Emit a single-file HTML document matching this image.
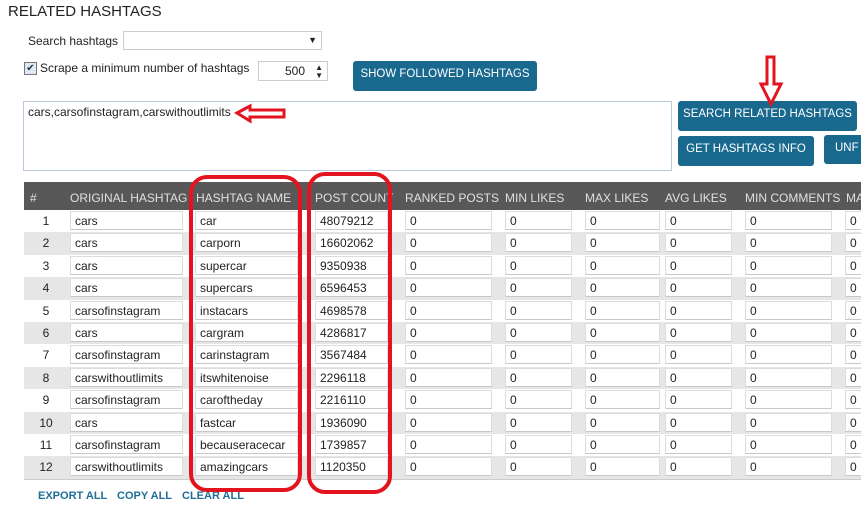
<!DOCTYPE html><html><head><meta charset="utf-8"><style>
body{margin:0;width:861px;height:510px;background:#fff;font-family:"Liberation Sans",sans-serif;position:relative;overflow:hidden;color:#222}
.a{position:absolute}
.t{font-size:12px;white-space:nowrap}
.btn{position:absolute;background:#19698f;color:#fff;font-size:11.5px;border-radius:3px;text-align:center;white-space:nowrap;overflow:hidden}
.row{position:absolute;left:24px;width:837px;height:22.4px;font-size:12px}
.g{background:#e6e6e6}
.row span{position:absolute;top:1px;height:19px;line-height:19px;background:#fff;border:1px solid #dcdcdc;border-bottom-color:#c8c8c8;padding-left:4px;box-sizing:border-box;white-space:nowrap;overflow:hidden}
.row b{position:absolute;left:0;width:44px;text-align:center;font-weight:normal;line-height:22px}
.c1{left:46px;width:113px}.c2{left:171px;width:103px}.c3{left:291px;width:73px}.c4{left:381px;width:87px}.c5{left:481px;width:67px}.c6{left:561px;width:75px}.c7{left:641px;width:67px}.c8{left:721px;width:87px}.c9{left:821px;width:30px}
.hd{position:absolute;top:182px;left:24px;width:837px;height:28px;background:#585858;color:#e0e0e0;font-size:12px}
.hd i{position:absolute;top:9px;font-style:normal;white-space:nowrap;overflow:hidden}
.lk{position:absolute;top:490px;color:#1f6e98;font-weight:bold;font-size:11px}
</style></head><body>
<div class="a" style="left:8px;top:3px;font-size:15px;color:#222">RELATED HASHTAGS</div>
<div class="a t" style="left:28px;top:34px">Search hashtags</div>
<div class="a" style="left:123px;top:31px;width:199px;height:19px;border:1px solid #ccc;box-sizing:border-box"><span class="a" style="right:4px;top:3px;font-size:9px">▼</span></div>
<div class="a" style="left:24px;top:62px;width:11px;height:11px;border:1px solid #777;background:#dfe8f5;font-size:10px;line-height:11px;text-align:center;color:#234">✔</div>
<div class="a t" style="left:40px;top:61px">Scrape a minimum number of hashtags</div>
<div class="a" style="left:258px;top:61px;width:70px;height:20px;border:1px solid #ccc;box-sizing:border-box;font-size:12px;line-height:18px;text-align:right;padding-right:22px">500<span class="a" style="right:4px;font-size:8px;line-height:8px;top:2px">▲<br>▼</span></div>
<div class="btn" style="left:353px;top:61px;width:184px;height:30px;line-height:27px">SHOW FOLLOWED HASHTAGS</div>
<div class="a" style="left:23px;top:101px;width:649px;height:70px;border:1px solid #b8c8dc;box-sizing:border-box;font-size:12px;padding:3px 4px">cars,carsofinstagram,carswithoutlimits</div>
<div class="btn" style="left:678px;top:101px;width:179px;height:30px;line-height:26px">SEARCH RELATED HASHTAGS</div>
<div class="btn" style="left:678px;top:136px;width:136px;height:30px;line-height:26px">GET HASHTAGS INFO</div>
<div class="btn" style="left:824px;top:135px;width:50px;height:29px;line-height:26px;text-align:left;padding-left:11px">UNF</div>
<div class="hd"><i style="left:6px">#</i><i style="left:46px;width:120px">ORIGINAL HASHTAG</i><i style="left:172px;width:118px">HASHTAG NAME</i><i style="left:291px;width:82px">POST COUNT</i><i style="left:381px;width:96px">RANKED POSTS</i><i style="left:481px">MIN LIKES</i><i style="left:561px">MAX LIKES</i><i style="left:641px">AVG LIKES</i><i style="left:721px;width:97px">MIN COMMENTS</i><i style="left:822px">MA</i></div>
<div class="row" style="top:210px"><b>1</b><span class="c1">cars</span><span class="c2">car</span><span class="c3">48079212</span><span class="c4">0</span><span class="c5">0</span><span class="c6">0</span><span class="c7">0</span><span class="c8">0</span><span class="c9">0</span></div>
<div class="row g" style="top:232.4px"><b>2</b><span class="c1">cars</span><span class="c2">carporn</span><span class="c3">16602062</span><span class="c4">0</span><span class="c5">0</span><span class="c6">0</span><span class="c7">0</span><span class="c8">0</span><span class="c9">0</span></div>
<div class="row" style="top:254.8px"><b>3</b><span class="c1">cars</span><span class="c2">supercar</span><span class="c3">9350938</span><span class="c4">0</span><span class="c5">0</span><span class="c6">0</span><span class="c7">0</span><span class="c8">0</span><span class="c9">0</span></div>
<div class="row g" style="top:277.2px"><b>4</b><span class="c1">cars</span><span class="c2">supercars</span><span class="c3">6596453</span><span class="c4">0</span><span class="c5">0</span><span class="c6">0</span><span class="c7">0</span><span class="c8">0</span><span class="c9">0</span></div>
<div class="row" style="top:299.6px"><b>5</b><span class="c1">carsofinstagram</span><span class="c2">instacars</span><span class="c3">4698578</span><span class="c4">0</span><span class="c5">0</span><span class="c6">0</span><span class="c7">0</span><span class="c8">0</span><span class="c9">0</span></div>
<div class="row g" style="top:322px"><b>6</b><span class="c1">cars</span><span class="c2">cargram</span><span class="c3">4286817</span><span class="c4">0</span><span class="c5">0</span><span class="c6">0</span><span class="c7">0</span><span class="c8">0</span><span class="c9">0</span></div>
<div class="row" style="top:344.4px"><b>7</b><span class="c1">carsofinstagram</span><span class="c2">carinstagram</span><span class="c3">3567484</span><span class="c4">0</span><span class="c5">0</span><span class="c6">0</span><span class="c7">0</span><span class="c8">0</span><span class="c9">0</span></div>
<div class="row g" style="top:366.8px"><b>8</b><span class="c1">carswithoutlimits</span><span class="c2">itswhitenoise</span><span class="c3">2296118</span><span class="c4">0</span><span class="c5">0</span><span class="c6">0</span><span class="c7">0</span><span class="c8">0</span><span class="c9">0</span></div>
<div class="row" style="top:389.2px"><b>9</b><span class="c1">carsofinstagram</span><span class="c2">caroftheday</span><span class="c3">2216110</span><span class="c4">0</span><span class="c5">0</span><span class="c6">0</span><span class="c7">0</span><span class="c8">0</span><span class="c9">0</span></div>
<div class="row g" style="top:411.6px"><b>10</b><span class="c1">cars</span><span class="c2">fastcar</span><span class="c3">1936090</span><span class="c4">0</span><span class="c5">0</span><span class="c6">0</span><span class="c7">0</span><span class="c8">0</span><span class="c9">0</span></div>
<div class="row" style="top:434px"><b>11</b><span class="c1">carsofinstagram</span><span class="c2">becauseracecar</span><span class="c3">1739857</span><span class="c4">0</span><span class="c5">0</span><span class="c6">0</span><span class="c7">0</span><span class="c8">0</span><span class="c9">0</span></div>
<div class="row g" style="top:456.4px"><b>12</b><span class="c1">carswithoutlimits</span><span class="c2">amazingcars</span><span class="c3">1120350</span><span class="c4">0</span><span class="c5">0</span><span class="c6">0</span><span class="c7">0</span><span class="c8">0</span><span class="c9">0</span></div>
<div class="a" style="left:24px;top:479px;width:837px;height:1px;background:#ccc"></div>
<div class="lk" style="left:38px">EXPORT ALL</div><div class="lk" style="left:117px">COPY ALL</div><div class="lk" style="left:182px">CLEAR ALL</div>
<svg class="a" style="left:0;top:0" width="861" height="510">
<g fill="none" stroke="#e3141f" stroke-width="4">
<rect x="191" y="177" width="109" height="313" rx="16"/>
<rect x="309" y="174" width="81" height="318" rx="16"/>
</g>
<g fill="none" stroke="#e3141f" stroke-width="3" stroke-linejoin="miter">
<path d="M237 113 L250 106 L250 110 L284 110 L284 117 L250 117 L250 121 Z"/>
<path d="M767 57 L774 57 L774 84 L781 84 L771 104 L761 84 L767 84 Z"/>
</g>
</svg>
</body></html>
